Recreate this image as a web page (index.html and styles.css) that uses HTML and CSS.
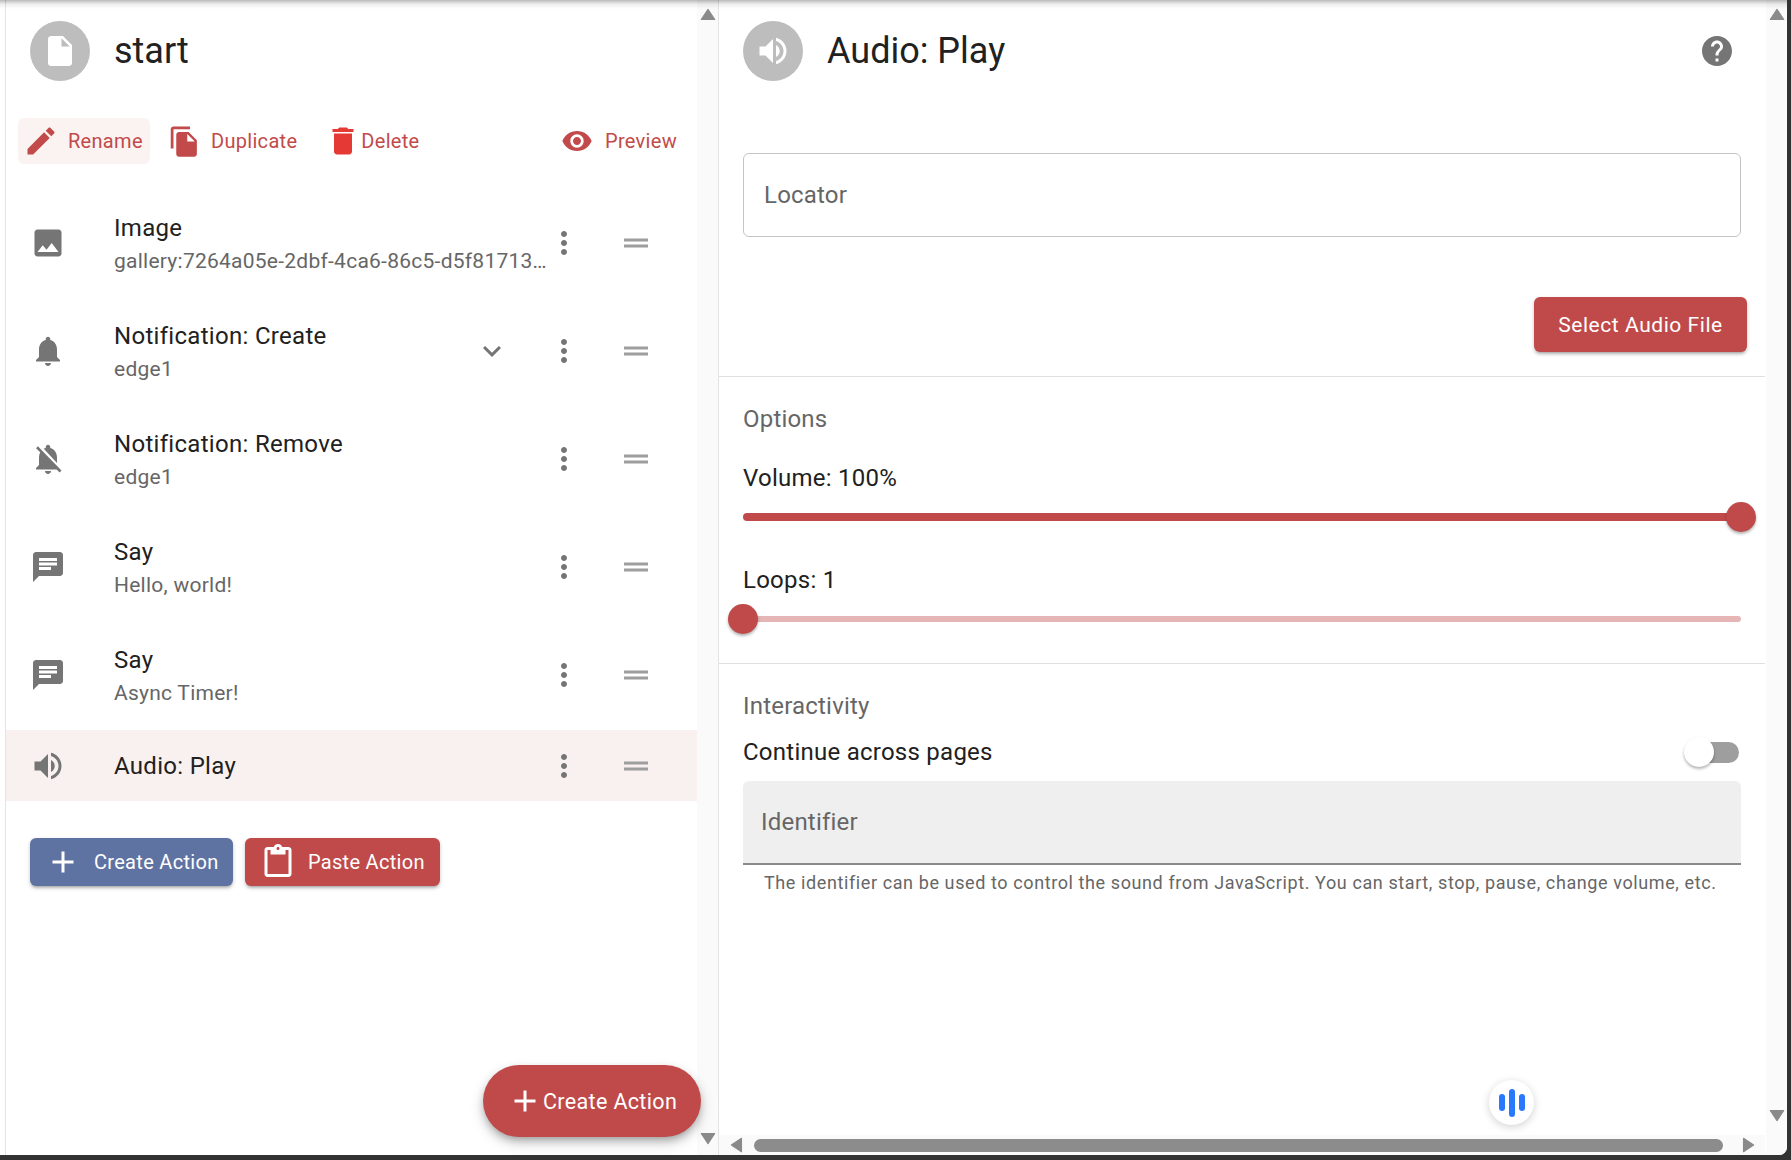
FILE: index.html
```html
<!DOCTYPE html>
<html lang="en">
<head>
<meta charset="utf-8">
<title>Audio: Play</title>
<link rel="stylesheet" href="styles.css">
</head>
<body>
<svg class="defs" aria-hidden="true">
  <symbol id="i-file" viewBox="0 0 24 24"><path d="M6 2c-1.1 0-1.99.9-1.99 2L4 20c0 1.1.89 2 1.99 2H18c1.1 0 2-.9 2-2V8l-6-6H6zm7 7V3.5L18.5 9H13z"/></symbol>
  <symbol id="i-edit" viewBox="0 0 24 24"><path d="M3 17.25V21h3.75L17.81 9.94l-3.75-3.75L3 17.25zM20.71 7.04c.39-.39.39-1.02 0-1.41l-2.34-2.34c-.39-.39-1.02-.39-1.41 0l-1.83 1.83 3.75 3.75 1.83-1.83z"/></symbol>
  <symbol id="i-copy" viewBox="0 0 24 24"><path d="M16 1H4c-1.1 0-2 .9-2 2v14h2V3h12V1zm-1 4l6 6v10c0 1.1-.9 2-2 2H7.99C6.89 23 6 22.1 6 21l.01-14c0-1.1.89-2 1.99-2h7zm-1 7h5.5L14 6.5V12z"/></symbol>
  <symbol id="i-delete" viewBox="0 0 24 24"><path d="M6 19c0 1.1.9 2 2 2h8c1.1 0 2-.9 2-2V7H6v12zM19 4h-3.5l-1-1h-5l-1 1H5v2h14V4z"/></symbol>
  <symbol id="i-eye" viewBox="0 0 24 24"><path d="M12 4.5C7 4.5 2.73 7.61 1 12c1.73 4.39 6 7.5 11 7.5s9.27-3.11 11-7.5c-1.73-4.39-6-7.5-11-7.5zM12 17c-2.76 0-5-2.24-5-5s2.24-5 5-5 5 2.24 5 5-2.24 5-5 5zm0-8c-1.66 0-3 1.34-3 3s1.34 3 3 3 3-1.34 3-3-1.34-3-3-3z"/></symbol>
  <symbol id="i-image" viewBox="0 0 24 24"><path d="M21 19V5c0-1.1-.9-2-2-2H5c-1.1 0-2 .9-2 2v14c0 1.1.9 2 2 2h14c1.1 0 2-.9 2-2zM8.5 13.5l2.5 3.01L14.5 12l4.5 6H5l3.5-4.5z"/></symbol>
  <symbol id="i-bell" viewBox="0 0 24 24"><path d="M12 22c1.1 0 2-.9 2-2h-4c0 1.1.89 2 2 2zm6-6v-5c0-3.07-1.64-5.64-4.5-6.32V4c0-.83-.67-1.5-1.5-1.5s-1.5.67-1.5 1.5v.68C7.63 5.36 6 7.92 6 11v5l-2 2v1h16v-1l-2-2z"/></symbol>
  <symbol id="i-bell-off" viewBox="0 0 24 24"><path d="M20 18.69L7.84 6.14 5.27 3.49 4 4.76l2.8 2.8v.01c-.52.99-.8 2.16-.8 3.42v5l-2 2v1h13.73l2 2L21 19.72l-1-1.03zM12 22c1.11 0 2-.89 2-2h-4c0 1.11.89 2 2 2zm6-7.32V11c0-3.08-1.64-5.64-4.5-6.32V4c0-.83-.67-1.5-1.5-1.5s-1.5.67-1.5 1.5v.68c-.15.03-.29.08-.42.12-.1.03-.2.07-.3.11h-.01c-.2.08-.4.17-.59.27-.01 0-.01.01-.02.01L18 14.68z"/></symbol>
  <symbol id="i-chat" viewBox="0 0 24 24"><path d="M20 2H4c-1.1 0-1.99.9-1.99 2L2 22l4-4h14c1.1 0 2-.9 2-2V4c0-1.1-.9-2-2-2zM6 9h12v2H6V9zm8 5H6v-2h8v2zm4-6H6V6h12v2z"/></symbol>
  <symbol id="i-volume" viewBox="0 0 24 24"><path d="M3 9v6h4l5 5V4L7 9H3zm13.5 3c0-1.77-1.02-3.29-2.5-4.03v8.05c1.48-.73 2.5-2.25 2.5-4.02zM14 3.23v2.06c2.89.86 5 3.54 5 6.71s-2.11 5.85-5 6.71v2.06c4.01-.91 7-4.49 7-8.77s-2.99-7.86-7-8.77z"/></symbol>
  <symbol id="i-expand" viewBox="0 0 24 24"><path d="M16.59 8.59L12 13.17 7.41 8.59 6 10l6 6 6-6z"/></symbol>
  <symbol id="i-more" viewBox="0 0 24 24"><path d="M12 8c1.1 0 2-.9 2-2s-.9-2-2-2-2 .9-2 2 .9 2 2 2zm0 2c-1.1 0-2 .9-2 2s.9 2 2 2 2-.9 2-2-.9-2-2-2zm0 6c-1.1 0-2 .9-2 2s.9 2 2 2 2-.9 2-2-.9-2-2-2z"/></symbol>
  <symbol id="i-drag" viewBox="0 0 24 24"><path d="M20 9H4v2h16V9zM4 15h16v-2H4v2z"/></symbol>
  <symbol id="i-add" viewBox="0 0 24 24"><path d="M19 13h-6v6h-2v-6H5v-2h6V5h2v6h6v2z"/></symbol>
  <symbol id="i-paste" viewBox="0 0 24 24"><path d="M19 2h-4.18C14.4.84 13.3 0 12 0c-1.3 0-2.4.84-2.82 2H5c-1.1 0-2 .9-2 2v16c0 1.1.9 2 2 2h14c1.1 0 2-.9 2-2V4c0-1.1-.9-2-2-2zm-7 0c.55 0 1 .45 1 1s-.45 1-1 1-1-.45-1-1 .45-1 1-1zm7 18H5V4h2v3h10V4h2v16z"/></symbol>
  <symbol id="i-help" viewBox="0 0 24 24"><path d="M12 2C6.48 2 2 6.48 2 12s4.48 10 10 10 10-4.48 10-10S17.52 2 12 2zm1 17h-2v-2h2v2zm2.07-7.75l-.9.92C13.45 12.9 13 13.5 13 15h-2v-.5c0-1.1.45-2.1 1.17-2.83l1.24-1.26c.37-.36.59-.86.59-1.41 0-1.1-.9-2-2-2s-2 .9-2 2H8c0-2.21 1.79-4 4-4s4 1.79 4 4c0 .88-.36 1.68-.93 2.25z"/></symbol>
  <symbol id="a-up" viewBox="0 0 16 16"><path d="M8 3L14 12H2z"/></symbol>
  <symbol id="a-down" viewBox="0 0 16 16"><path d="M8 13L2 4H14z"/></symbol>
  <symbol id="a-left" viewBox="0 0 16 16"><path d="M3 8L12 2V14z"/></symbol>
  <symbol id="a-right" viewBox="0 0 16 16"><path d="M13 8L4 14V2z"/></symbol>
</svg>

<div class="window">
  <section class="pane pane-left">
    <div class="pane-body">
      <header class="head">
        <div class="avatar"><svg class="avatar-icon"><use href="#i-file"/></svg></div>
        <h1 class="title">start</h1>
      </header>

      <nav class="actions">
        <a class="act act-rename"><svg class="ic36"><use href="#i-edit"/></svg><span>Rename</span></a>
        <a class="act act-dup"><svg class="ic33"><use href="#i-copy"/></svg><span>Duplicate</span></a>
        <a class="act act-del"><svg class="ic36 del"><use href="#i-delete"/></svg><span>Delete</span></a>
        <a class="act act-prev"><svg class="ic32"><use href="#i-eye"/></svg><span>Preview</span></a>
      </nav>

      <ul class="list">
        <li class="item">
          <svg class="ic36 item-ic"><use href="#i-image"/></svg>
          <div class="item-text"><div class="item-title">Image</div><div class="item-sub">gallery:7264a05e-2dbf-4ca6-86c5-d5f81713d0c1e4a7</div></div>
          <svg class="ic36 more"><use href="#i-more"/></svg>
          <svg class="ic36 drag"><use href="#i-drag"/></svg>
        </li>
        <li class="item">
          <svg class="ic36 item-ic"><use href="#i-bell"/></svg>
          <div class="item-text"><div class="item-title">Notification: Create</div><div class="item-sub">edge1</div></div>
          <svg class="ic36 chev"><use href="#i-expand"/></svg>
          <svg class="ic36 more"><use href="#i-more"/></svg>
          <svg class="ic36 drag"><use href="#i-drag"/></svg>
        </li>
        <li class="item">
          <svg class="ic36 item-ic"><use href="#i-bell-off"/></svg>
          <div class="item-text"><div class="item-title">Notification: Remove</div><div class="item-sub">edge1</div></div>
          <svg class="ic36 more"><use href="#i-more"/></svg>
          <svg class="ic36 drag"><use href="#i-drag"/></svg>
        </li>
        <li class="item">
          <svg class="ic36 item-ic"><use href="#i-chat"/></svg>
          <div class="item-text"><div class="item-title">Say</div><div class="item-sub">Hello, world!</div></div>
          <svg class="ic36 more"><use href="#i-more"/></svg>
          <svg class="ic36 drag"><use href="#i-drag"/></svg>
        </li>
        <li class="item">
          <svg class="ic36 item-ic"><use href="#i-chat"/></svg>
          <div class="item-text"><div class="item-title">Say</div><div class="item-sub">Async Timer!</div></div>
          <svg class="ic36 more"><use href="#i-more"/></svg>
          <svg class="ic36 drag"><use href="#i-drag"/></svg>
        </li>
        <li class="item item-selected">
          <svg class="ic36 item-ic"><use href="#i-volume"/></svg>
          <div class="item-text"><div class="item-title">Audio: Play</div></div>
          <svg class="ic36 more"><use href="#i-more"/></svg>
          <svg class="ic36 drag"><use href="#i-drag"/></svg>
        </li>
      </ul>

      <div class="create-row">
        <button class="btn btn-blue"><svg class="ic36"><use href="#i-add"/></svg><span>Create Action</span></button>
        <button class="btn btn-red"><svg class="ic36"><use href="#i-paste"/></svg><span>Paste Action</span></button>
      </div>
    </div>
    <div class="vbar">
      <svg class="arrow"><use href="#a-up"/></svg>
      <svg class="arrow"><use href="#a-down"/></svg>
    </div>
    <button class="fab"><svg class="ic36"><use href="#i-add"/></svg><span>Create Action</span></button>
  </section>

  <section class="pane pane-right">
    <div class="editor">
      <header class="head head-right">
        <div class="avatar"><svg class="avatar-icon"><use href="#i-volume"/></svg></div>
        <h2 class="title">Audio: Play</h2>
        <svg class="ic36 help"><use href="#i-help"/></svg>
      </header>

      <div class="block block-locator">
        <div class="field-outline">Locator</div>
        <div class="select-row"><button class="btn-select">Select Audio File</button></div>
      </div>

      <div class="block block-options">
        <h3 class="section-label">Options</h3>
        <div class="slider-label">Volume: 100%</div>
        <div class="slider slider-volume"><div class="rail rail-full"><span class="thumb thumb-end"></span></div></div>
        <div class="slider-label">Loops: 1</div>
        <div class="slider slider-loops"><div class="rail rail-light"><span class="thumb thumb-start"></span></div></div>
      </div>

      <div class="block block-inter">
        <h3 class="section-label">Interactivity</h3>
        <div class="switch-row">
          <span class="switch-label">Continue across pages</span>
          <span class="switch"><span class="switch-thumb"></span></span>
        </div>
        <div class="field-filled">Identifier</div>
        <p class="helper">The identifier can be used to control the sound from JavaScript. You can start, stop, pause, change volume, etc.</p>
      </div>
    </div>
    <div class="vbar">
      <svg class="arrow"><use href="#a-up"/></svg>
      <svg class="arrow"><use href="#a-down"/></svg>
    </div>
    <div class="hbar">
      <svg class="arrow"><use href="#a-left"/></svg>
      <span class="hthumb"></span>
      <svg class="arrow"><use href="#a-right"/></svg>
    </div>
    <div class="voice"><span class="vb vb-s"></span><span class="vb vb-l"></span><span class="vb vb-s"></span></div>
  </section>
</div>
</body>
</html>
```

FILE: styles.css
```css
* { box-sizing: border-box; }
html, body { margin: 0; height: 100%; }
body {
  background: #333;
  font-family: Roboto, "Liberation Sans", sans-serif;
  color: #212121;
  overflow: hidden;
}
.defs { display: none; }
svg { fill: currentColor; display: block; flex: none; }
.ic36 { width: 36px; height: 36px; }
.ic33 { width: 33px; height: 33px; }
.ic32 { width: 32px; height: 32px; }

.window {
  position: relative;
  width: 1787px;
  height: 1155px;
  background: #fff;
  border-bottom-right-radius: 8px;
  display: flex;
  padding-left: 5px;
  overflow: hidden;
}
.window::after {
  content: "";
  position: absolute;
  left: 0; right: 0; top: 0;
  height: 9px;
  background: linear-gradient(to bottom, rgba(0,0,0,.28), rgba(0,0,0,.07) 45%, rgba(0,0,0,0));
  pointer-events: none;
}
.pane { position: relative; display: flex; }
.pane-left {
  width: 714px;
  border-left: 1px solid #e4e4e4;
  border-right: 1px solid #e4e4e4;
}
.pane-right {
  flex: 1;
  display: grid;
  grid-template-columns: 1fr 22px;
  grid-template-rows: 1fr 20px;
}
.pane-body { flex: 1; min-width: 0; }

.head { display: flex; align-items: center; padding: 21px 0 0 24px; }
.avatar {
  width: 60px; height: 60px; border-radius: 50%;
  background: #bdbdbd; color: #fff;
  display: flex; align-items: center; justify-content: center;
}
.avatar-icon { width: 36px; height: 36px; }
.title { margin: 0 0 0 24px; font-size: 36px; line-height: 60px; font-weight: 400; }

.actions { display: flex; align-items: center; height: 46px; margin: 37px 0 25px 12px; padding-right: 20px; }
.act {
  display: flex; align-items: center; height: 46px; border-radius: 6px;
  color: #c24a4a; font-size: 20px; letter-spacing: .3px;
}
.act-rename { background: #faf3f2; width: 132px; padding-left: 5px; gap: 9px; }
.act-dup { margin-left: 18px; gap: 10px; }
.act-del { margin-left: 28px; gap: 0; }
.act-prev { margin-left: auto; gap: 12px; }
.del { color: #e53935; }

.list { list-style: none; margin: 0; padding: 0; }
.item { display: flex; align-items: center; height: 108px; padding: 0 43px 0 24px; }
.item-selected { height: 71px; margin-top: 1px; background: #f9f1f0; }
.item-ic { color: #757575; margin-right: 48px; }
.item-text { flex: 1; min-width: 0; margin-right: -3px; }
.item-title { font-size: 24px; line-height: 36px; color: #212121; letter-spacing: .3px; }
.item-sub {
  font-size: 21px; line-height: 30px; color: #666; letter-spacing: .25px;
  white-space: nowrap; overflow: hidden; text-overflow: ellipsis;
}
.chev { color: #757575; margin-right: 36px; }
.more { color: #757575; }
.drag { color: #9e9e9e; margin-left: 36px; }

.create-row { display: flex; gap: 12px; margin: 37px 0 0 24px; }
.btn {
  display: flex; align-items: center; height: 48px; border: 0; border-radius: 6px;
  color: #fff; font: 400 20px Roboto, sans-serif; letter-spacing: .3px;
  box-shadow: 0 3px 3px -2px rgba(0,0,0,.25), 0 2px 4px rgba(0,0,0,.2);
}
.btn-blue { background: #5f73a3; width: 203px; padding: 0 0 0 15px; gap: 13px; }
.btn-red { background: #c04a4a; width: 195px; padding: 0 0 0 15px; gap: 12px; }

.fab {
  position: absolute; left: 477px; top: 1065px;
  display: flex; align-items: center;
  width: 218px; height: 72px; border: 0; border-radius: 36px;
  padding: 0 0 0 24px; gap: 0;
  background: #c04a4a; color: #fff;
  font: 400 21.5px Roboto, sans-serif; letter-spacing: .35px;
  box-shadow: 0 4px 8px -2px rgba(0,0,0,.3), 0 6px 14px rgba(0,0,0,.18);
}

.vbar {
  width: 21px; background: #fafafa; color: #8a8a8a;
  display: flex; flex-direction: column; justify-content: space-between; align-items: center;
  padding: 6px 0 8px;
}
.pane-right .vbar { grid-column: 2; grid-row: 1 / span 2; justify-self: end; padding-bottom: 31px; }
.arrow { width: 18px; height: 18px; stroke: currentColor; stroke-width: 1; stroke-linejoin: round; }
.hbar {
  grid-column: 1; grid-row: 2; background: #fafafa; color: #8a8a8a;
  display: flex; align-items: center; padding: 0 8px 0 9px;
}
.hthumb { flex: 1; height: 13px; margin: 0 16px 0 8px; border-radius: 7px; background: #8c8c8c; }

.editor { grid-column: 1; grid-row: 1; min-width: 0; }
.head-right .help { color: #757575; margin-left: auto; margin-right: 30px; }
.block { padding: 0 24px; border-bottom: 1px solid #e0e0e0; }
.block-inter { border-bottom: 0; }
.block-locator { padding-top: 72px; padding-bottom: 24px; }
.block-options { padding-top: 24px; height: 287px; }
.block-inter { padding-top: 24px; }
.field-outline {
  height: 84px; padding-left: 20px; border: 1px solid #c4c4c4; border-radius: 6px;
  display: flex; align-items: center; font-size: 24px; color: #666; letter-spacing: .2px;
}
.select-row { display: flex; justify-content: flex-end; margin: 60px -6px 0 0; }
.btn-select {
  width: 213px; height: 55px; border: 0; border-radius: 6px; background: #c04a4a; color: #fff;
  font: 400 21px Roboto, sans-serif; letter-spacing: .55px;
  box-shadow: 0 3px 3px -2px rgba(0,0,0,.25), 0 2px 4px rgba(0,0,0,.2);
}
.section-label { margin: 0; font-size: 24px; line-height: 36px; font-weight: 400; color: #666; letter-spacing: .2px; }
.slider-label { font-size: 24px; line-height: 36px; letter-spacing: .25px; }
.block-options .section-label + .slider-label { margin-top: 23px; }
.slider { height: 48px; display: flex; align-items: center; }
.slider-volume { margin-top: -3px; margin-bottom: 21px; }
.slider-loops { margin-top: -3px; }
.rail { position: relative; width: 100%; border-radius: 4px; }
.rail-full { height: 8px; background: #c04a4a; }
.rail-light { height: 6px; background: #e6b5b5; }
.thumb {
  position: absolute; top: 50%; width: 30px; height: 30px; margin-top: -15px; border-radius: 50%;
  background: #c04a4a; box-shadow: 0 2px 3px rgba(0,0,0,.3);
}
.thumb-end { right: -15px; }
.thumb-start { left: -15px; }
.switch-row { display: flex; align-items: center; justify-content: space-between; height: 36px; margin-top: 10px; }
.switch-label { font-size: 24px; letter-spacing: .25px; }
.switch { position: relative; width: 52px; height: 21px; margin-right: 2px; border-radius: 11px; background: #9e9e9e; }
.switch-thumb {
  position: absolute; left: -3px; top: -5px; width: 30px; height: 30px; border-radius: 50%;
  background: #fff; box-shadow: 0 2px 3px rgba(0,0,0,.3);
}
.field-filled {
  height: 84px; margin-top: 11px; padding-left: 18px;
  background: #efefef; border-bottom: 2px solid #8a8a8a; border-radius: 6px 6px 0 0;
  display: flex; align-items: center; font-size: 24px; color: #666; letter-spacing: .2px;
}
.helper { margin: 4px 0 0; padding-left: 21px; font-size: 18px; line-height: 27px; color: #666; letter-spacing: .6px; }

.voice {
  position: absolute; left: 770px; top: 1080px; width: 45px; height: 45px; border-radius: 50%;
  background: #fff; box-shadow: 0 2px 8px rgba(0,0,0,.18);
  display: flex; align-items: center; justify-content: center; gap: 4px;
}
.vb { width: 6px; border-radius: 3px; background: #2979ff; }
.vb-s { height: 17px; }
.vb-l { height: 28px; }
```
